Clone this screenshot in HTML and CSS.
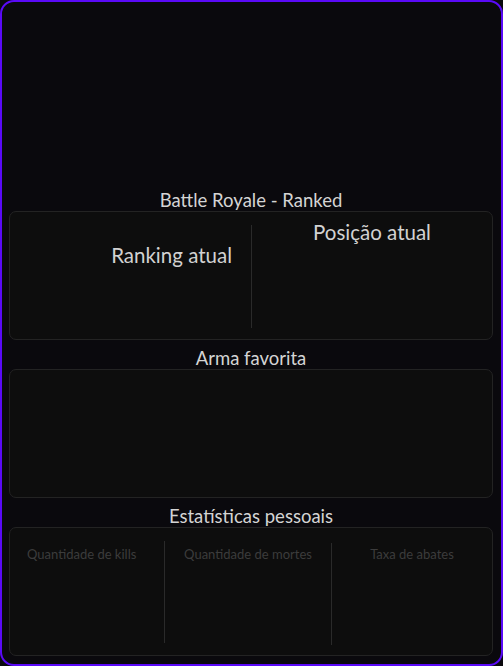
FILE: index.html
```html
<!DOCTYPE html>
<html lang="pt">
<head>
<meta charset="utf-8">
<title>Perfil</title>
<link rel="stylesheet" href="styles.css">
</head>
<body>
<div class="frame">
  <section class="section">
    <h2 class="section-title">Battle Royale - Ranked</h2>
    <div class="card ranked">
      <div class="col col-left"><span class="big-label">Ranking atual</span></div>
      <div class="col col-right divided"><span class="big-label">Posição atual</span></div>
    </div>
  </section>
  <section class="section">
    <h2 class="section-title">Arma favorita</h2>
    <div class="card weapon"></div>
  </section>
  <section class="section">
    <h2 class="section-title">Estatísticas pessoais</h2>
    <div class="card stats">
      <div class="stat stat-first"><span class="stat-label">Quantidade de kills</span></div>
      <div class="stat divided"><span class="stat-label">Quantidade de mortes</span></div>
      <div class="stat divided shifted"><span class="stat-label">Taxa de abates</span></div>
    </div>
  </section>
</div>
</body>
</html>
```
FILE: styles.css
```css
html, body {
  margin: 0;
  padding: 0;
  background: #0a090d;
}
.frame {
  box-sizing: border-box;
  width: 503px;
  height: 666px;
  border: 2px solid #5a0af7;
  border-radius: 14px;
  background: #0a090d;
  padding: 187px 8px 0 7px;
  display: flex;
  flex-direction: column;
  gap: 7px;
  font-family: Lato, "Noto Sans", sans-serif;
}
.section {
  display: flex;
  flex-direction: column;
}
.section-title {
  margin: 0;
  height: 22px;
  line-height: 22px;
  font-size: 18.5px;
  font-weight: 400;
  text-align: center;
  color: #d4d4d4;
}
.card {
  box-sizing: border-box;
  height: 129px;
  border: 1px solid #232323;
  border-radius: 7px;
  background: #0d0d0d;
}
.ranked {
  display: grid;
  grid-template-columns: 241px 1fr;
  padding: 13px 0 11px;
}
.divided {
  border-left: 1px solid #2a2a2a;
}
.col-left {
  display: flex;
  justify-content: flex-end;
  padding: 20px 19px 0 0;
}
.col-right {
  display: flex;
  justify-content: center;
}
.big-label {
  font-size: 20.5px;
  line-height: 16px;
  height: 16px;
  margin-top: -1px;
  color: #d2d2d2;
}
.col-left .big-label {
  margin-top: 2px;
}
.stats {
  display: grid;
  grid-template-columns: 154px 167px 1fr;
  padding: 13px 0 12px;
}
.stat {
  display: flex;
  justify-content: center;
  padding-top: 5px;
}
.stat-first {
  justify-content: flex-start;
  padding-left: 17px;
}
.stat.shifted {
  margin-top: 2px;
  margin-bottom: -2px;
  padding-top: 3px;
}
.stat-label {
  font-size: 13px;
  line-height: 16px;
  color: #3c3c3c;
}
```
